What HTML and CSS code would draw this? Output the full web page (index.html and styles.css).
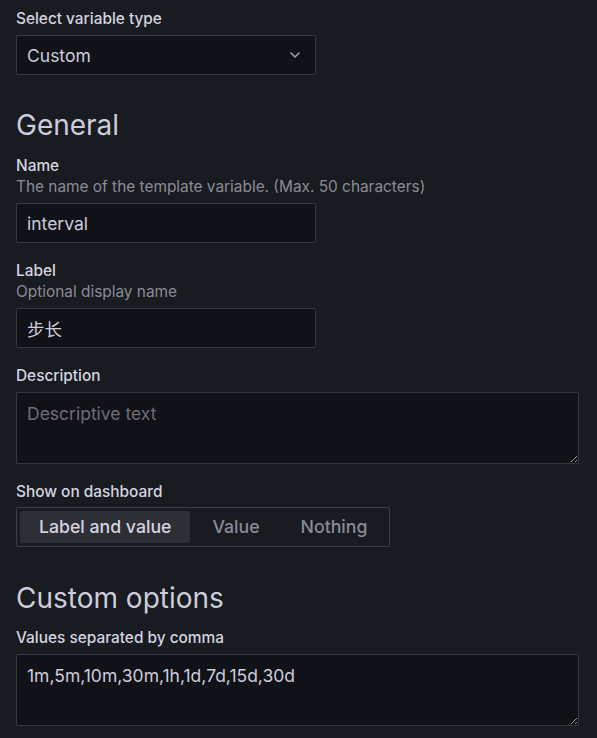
FILE: index.html
```html
<!DOCTYPE html>
<html lang="en">
<head>
<meta charset="utf-8">
<link rel="stylesheet" href="styles.css">
</head>
<body>
<div class="page">
  <div class="field">
    <div class="label-wrap"><div class="label">Select variable type</div></div>
    <div class="select">
      <span class="select-value">Custom</span>
      <svg class="chevron" width="10" height="6" viewBox="0 0 10 6"><path d="M1 1 L5 5 L9 1" fill="none" stroke="#9fa1ab" stroke-width="1.6" stroke-linecap="round" stroke-linejoin="round"/></svg>
    </div>
  </div>

  <h3 class="section-title">General</h3>

  <div class="field">
    <div class="label-wrap">
      <div class="label">Name</div>
      <div class="desc">The name of the template variable. (Max. 50 characters)</div>
    </div>
    <input class="input" type="text" value="interval">
  </div>

  <div class="field">
    <div class="label-wrap">
      <div class="label">Label</div>
      <div class="desc">Optional display name</div>
    </div>
    <input class="input" type="text" value="步长">
  </div>

  <div class="field">
    <div class="label-wrap"><div class="label">Description</div></div>
    <textarea class="textarea" placeholder="Descriptive text"></textarea>
  </div>

  <div class="field tight">
    <div class="label-wrap"><div class="label">Show on dashboard</div></div>
    <div class="radio-group">
      <span class="radio active">Label and value</span>
      <span class="radio">Value</span>
      <span class="radio">Nothing</span>
    </div>
  </div>

  <h3 class="section-title second">Custom options</h3>

  <div class="field">
    <div class="label-wrap"><div class="label">Values separated by comma</div></div>
    <textarea class="textarea">1m,5m,10m,30m,1h,1d,7d,15d,30d</textarea>
  </div>
</div>
</body>
</html>
```

FILE: styles.css
```css
html, body {
  margin: 0;
  padding: 0;
  background: #181b1f;
  color-scheme: dark;
}
body {
  font-family: Inter, "Noto Sans CJK SC", sans-serif;
  color: #ccccdc;
}
.page {
  padding: 8px 16px 0 16px;
  display: flex;
  flex-direction: column;
}
.field {
  display: flex;
  flex-direction: column;
  margin-bottom: 17px;
}
.label-wrap {
  margin-bottom: 6px;
}
.field.tight .label-wrap {
  margin-bottom: 5px;
}
.label {
  font-size: 15.4px;
  line-height: 21px;
  font-weight: 500;
  color: #d4d4e0;
}
.desc {
  font-size: 15.4px;
  line-height: 21px;
  font-weight: 400;
  color: rgba(204, 204, 220, 0.65);
}
.select {
  width: 300px;
  height: 40px;
  box-sizing: border-box;
  background: #111217;
  border: 1px solid rgba(204, 204, 220, 0.2);
  border-radius: 2px;
  display: flex;
  align-items: center;
  justify-content: space-between;
  padding: 0 15px 0 10px;
}
.select-value {
  font-size: 17.5px;
}
.chevron {
  display: block;
}
.section-title {
  margin: 16px 0 13px 0;
  font-size: 28px;
  line-height: 34px;
  font-weight: 400;
  color: #ccccdc;
}
.section-title.second {
  margin: 17px 0 12px 0;
}
.input {
  width: 300px;
  height: 40px;
  box-sizing: border-box;
  background: #111217;
  border: 1px solid rgba(204, 204, 220, 0.2);
  border-radius: 2px;
  padding: 0 10px;
  font-family: Inter, "Noto Sans CJK SC", sans-serif;
  font-size: 17.5px;
  color: #ccccdc;
  outline: none;
}
.textarea {
  width: 563px;
  height: 72px;
  box-sizing: border-box;
  background: #111217;
  border: 1px solid rgba(204, 204, 220, 0.2);
  border-radius: 2px;
  padding: 10px 10px;
  font-family: Inter, "Noto Sans CJK SC", sans-serif;
  font-size: 17.5px;
  line-height: 22px;
  color: #ccccdc;
  resize: vertical;
  outline: none;
  display: block;
}
.textarea::placeholder {
  color: rgba(204, 204, 220, 0.5);
}
.radio-group {
  align-self: flex-start;
  display: flex;
  gap: 3px;
  padding: 3px;
  border: 1px solid rgba(204, 204, 220, 0.2);
  border-radius: 2px;
  background: #181b1f;
}
.radio {
  height: 32px;
  line-height: 32px;
  padding: 0 19px;
  font-size: 17.7px;
  font-weight: 500;
  color: rgba(204, 204, 220, 0.65);
  border-radius: 2px;
}
.radio.active {
  background: #2d2f35;
  color: #d4d4e0;
}
```
